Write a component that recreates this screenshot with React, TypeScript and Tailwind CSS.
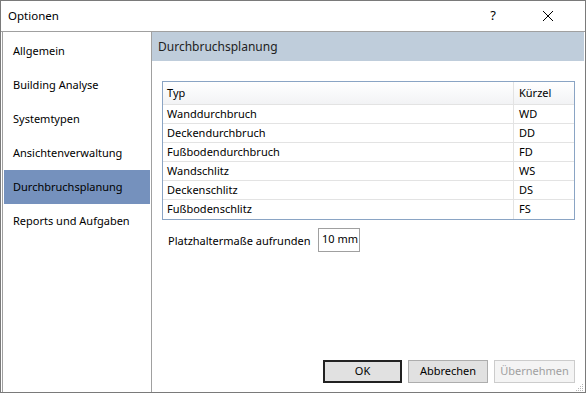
import React from "react";

const sections = [
  "Allgemein",
  "Building Analyse",
  "Systemtypen",
  "Ansichtenverwaltung",
  "Durchbruchsplanung",
  "Reports und Aufgaben",
];

const rows = [
  { typ: "Wanddurchbruch", code: "WD" },
  { typ: "Deckendurchbruch", code: "DD" },
  { typ: "Fußbodendurchbruch", code: "FD" },
  { typ: "Wandschlitz", code: "WS" },
  { typ: "Deckenschlitz", code: "DS" },
  { typ: "Fußbodenschlitz", code: "FS" },
];

export default function App() {
  const active = "Durchbruchsplanung";

  return (
    <div
      className="w-[586px] h-[393px] bg-white border border-[#7a7a7a] flex flex-col text-[11px] text-black overflow-hidden whitespace-nowrap"
      style={{ fontFamily: '"Noto Sans", "Open Sans", sans-serif' }}
    >
      {/* Title bar */}
      <div className="h-[30px] flex items-center shrink-0">
        <span className="pl-[7px] flex-1 text-[11.5px]">Optionen</span>
        <span className="w-[20px] text-center text-[13px] mr-[38px]">?</span>
        <div className="w-[14px] flex justify-center mr-[30px]">
          <svg width="12" height="12" viewBox="0 0 12 12">
            <path d="M1 1 L11 11 M11 1 L1 11" stroke="#000" strokeWidth="1" />
          </svg>
        </div>
      </div>

      <div className="flex flex-1 min-h-0 border-t border-[#a0a0a0]">
        {/* Sidebar */}
        <div className="w-[150px] shrink-0 border-l border-[#a0a0a0] ml-[1px] border-r border-[#a0a0a0] pt-[2px] flex flex-col">
          {sections.map((s) => (
            <div
              key={s}
              className={`h-[34px] flex items-center pl-[9px] mx-[1px] ${
                s === active ? "bg-[#7591bd]" : ""
              }`}
            >
              {s}
            </div>
          ))}
        </div>

        {/* Main panel */}
        <div className="flex-1 flex flex-col mr-[1px]">
          <div className="h-[29px] bg-[#bfcddb] flex items-center pl-[6px] text-[12px] text-[#222]">
            Durchbruchsplanung
          </div>

          <div className="flex-1 flex flex-col pt-[20px] pl-[10px] pr-[9px] pb-[9px]">
            {/* Table */}
            <div className="border border-[#8aa4c4]">
              <div className="h-[23px] flex bg-gradient-to-b from-white to-[#f2f3f5] border-b border-[#e3e3e3]">
                <div className="w-[351px] pl-[4px] flex items-center border-r border-[#e3e3e3]">
                  Typ
                </div>
                <div className="flex-1 pl-[5px] flex items-center">Kürzel</div>
              </div>
              {rows.map((r, i) => (
                <div
                  key={r.code}
                  className={`h-[19px] flex ${
                    i < rows.length - 1 ? "border-b border-[#e3e3e3]" : ""
                  }`}
                >
                  <div className="w-[351px] pl-[4px] flex items-center border-r border-[#e3e3e3]">
                    {r.typ}
                  </div>
                  <div className="flex-1 pl-[5px] flex items-center">
                    {r.code}
                  </div>
                </div>
              ))}
            </div>

            {/* Rounding input */}
            <div className="flex items-center mt-[8px] pl-[6px]">
              <span className="w-[150px] pt-[3px]">Platzhaltermaße aufrunden</span>
              <div className="w-[42px] h-[24px] border border-[#a0a0a0] pl-[3px] pt-[2px]">
                10 mm
              </div>
            </div>

            <div className="flex-1" />

            {/* Buttons */}
            <div className="flex justify-end gap-[6px] relative">
              <button className="w-[79px] h-[23px] bg-[#e1e1e1] border-2 border-[#222]">
                OK
              </button>
              <button className="w-[80px] h-[23px] bg-[#e1e1e1] border border-[#adadad]">
                Abbrechen
              </button>
              <button className="w-[81px] h-[23px] bg-[#f4f4f4] border border-[#cccccc] text-[#a0a0a0]">
                Übernehmen
              </button>
              <svg
                className="absolute right-[-9px] bottom-[-9px]"
                width="9"
                height="9"
                viewBox="0 0 9 9"
              >
                {[
                  [7, 1],
                  [5, 3],
                  [7, 3],
                  [3, 5],
                  [5, 5],
                  [7, 5],
                  [1, 7],
                  [3, 7],
                  [5, 7],
                  [7, 7],
                ].map(([x, y]) => (
                  <rect key={`${x}-${y}`} x={x} y={y} width="1" height="1" fill="#b8b8b8" />
                ))}
              </svg>
            </div>
          </div>
        </div>
      </div>
    </div>
  );
}
